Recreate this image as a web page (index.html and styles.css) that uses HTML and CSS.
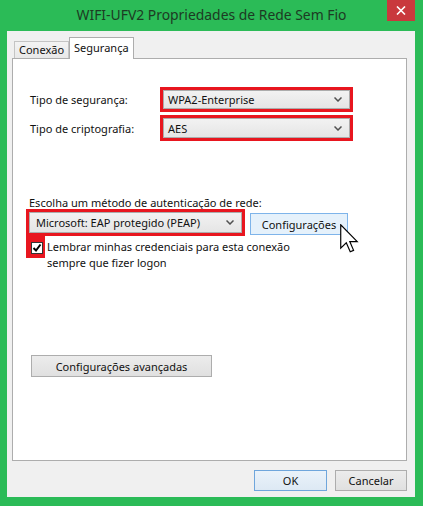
FILE: index.html
```html
<!DOCTYPE html>
<html lang="pt">
<head>
    <meta charset="UTF-8">
    <title>WIFI-UFV2 Propriedades de Rede Sem Fio</title>
    <link rel="stylesheet" href="styles.css">
</head>
<body>
    <div class="title-bar">
        <span class="title-txt">WIFI-UFV2 Propriedades de Rede Sem Fio</span>
        <span class="close-btn">
            <svg width="10" height="9" viewBox="0 0 10 9"><path d="M1 0.5 L9 8.5 M9 0.5 L1 8.5" stroke="#fff" stroke-width="1.6"/></svg>
        </span>
    </div>

    <div class="client">
        <div class="tabs">
            <div class="tab">Conexão</div>
            <div class="tab tab-active">Segurança</div>
        </div>

        <div class="panel">
            <div class="type-grid">
                <span class="lbl">Tipo de segurança:</span>
                <div class="mark">
                    <div class="combo">
                        <span>WPA2-Enterprise</span>
                        <svg class="chev" width="8" height="5" viewBox="0 0 8 5"><path d="M0.5 0.5 L4 4 L7.5 0.5" fill="none" stroke="#505050" stroke-width="1.5"/></svg>
                    </div>
                </div>
                <span class="lbl">Tipo de criptografia:</span>
                <div class="mark">
                    <div class="combo">
                        <span>AES</span>
                        <svg class="chev" width="8" height="5" viewBox="0 0 8 5"><path d="M0.5 0.5 L4 4 L7.5 0.5" fill="none" stroke="#505050" stroke-width="1.5"/></svg>
                    </div>
                </div>
            </div>

            <p class="method-lbl">Escolha um método de autenticação de rede:</p>
            <div class="method-row">
                <div class="mark mark-method">
                    <div class="combo combo-method">
                        <span>Microsoft: EAP protegido (PEAP)</span>
                        <svg class="chev" width="8" height="5" viewBox="0 0 8 5"><path d="M0.5 0.5 L4 4 L7.5 0.5" fill="none" stroke="#505050" stroke-width="1.5"/></svg>
                    </div>
                </div>
                <button class="btn btn-hot cfg-btn">Configurações</button>
            </div>
            <div class="remember-row">
                <div class="mark-chk">
                    <span class="chk">
                        <svg width="10" height="10" viewBox="0 0 10 10"><path d="M1.5 5 L4 7.5 L8.5 1.5" fill="none" stroke="#000" stroke-width="2"/></svg>
                    </span>
                </div>
                <p class="remember-txt">Lembrar minhas credenciais para esta conexão<br>sempre que fizer logon</p>
            </div>

            <button class="btn adv-btn">Configurações avançadas</button>
        </div>

        <div class="actions">
            <button class="btn btn-default act-btn">OK</button>
            <button class="btn act-btn">Cancelar</button>
        </div>
    </div>

    <svg class="cursor" width="19" height="30" viewBox="0 0 13 20.5">
        <path d="M0.5 0.5 L0.5 16.5 L4.3 12.8 L7 19 L9.3 18 L6.7 12 L11.8 12 Z" fill="#fff" stroke="#000" stroke-width="0.8" stroke-linejoin="miter"/>
    </svg>
</body>
</html>
```

FILE: styles.css
```css
*, *:before, *:after {
    margin: 0;
    padding: 0;
    box-sizing: border-box;
}
html, body {
    width: 423px;
    height: 506px;
    overflow: hidden;
}
body {
    background: #2bbb57;
    font-family: 'Segoe UI', 'Noto Sans', sans-serif;
    font-size: 11px;
    color: #111;
}
.title-bar {
    display: flex;
    align-items: flex-start;
    height: 31px;
    padding-left: 36px;
    padding-right: 8px;
}
.title-txt {
    flex: 1;
    text-align: center;
    font-size: 13.9px;
    line-height: 30px;
    color: #1d3a23;
}
.close-btn {
    display: flex;
    align-items: center;
    justify-content: center;
    width: 28px;
    height: 21px;
    background: #c9383d;
}
.client {
    margin: 0 8px 0 7px;
    height: 466px;
    background: #f0f0f0;
    padding: 6px 8px 0 5px;
}
.tabs {
    display: flex;
    align-items: flex-end;
    height: 21px;
    padding-left: 2px;
}
.tab {
    height: 17px;
    padding: 0 4px;
    line-height: 15px;
    border: 1px solid #c4c4c4;
    border-bottom: none;
    background: linear-gradient(#f3f3f3, #e8e8e8);
}
.tab-active {
    position: relative;
    height: 22px;
    margin-bottom: -1px;
    padding: 0 4px;
    line-height: 19px;
    background: #fff;
    border-color: #adadad;
    z-index: 1;
}
.panel {
    height: 403px;
    background: #fff;
    border: 1px solid #adadad;
    padding: 28px 0 0 17px;
}
.type-grid {
    display: grid;
    grid-template-columns: 130px 193px;
    grid-template-rows: 25px 26px;
    row-gap: 3px;
    align-items: center;
}
.mark {
    height: 100%;
    background: #e8161f;
    padding: 3px;
}
.combo {
    display: flex;
    align-items: center;
    justify-content: space-between;
    height: 100%;
    padding: 0 7px 0 4px;
    border: 1px solid #acacac;
    background: linear-gradient(#f2f2f2, #e5e5e5);
}
.method-lbl {
    margin-top: 54px;
    margin-left: -1px;
    line-height: 15px;
}
.method-row {
    display: flex;
    align-items: flex-start;
    margin-top: -1px;
    margin-left: -4px;
}
.mark-method {
    width: 219px;
    height: 27px;
}
.combo-method {
    padding-left: 6px;
}
.btn {
    font-family: inherit;
    font-size: 11px;
    color: #111;
    border: 1px solid #adadad;
    background: linear-gradient(#ececec, #e0e0e0);
}
.btn-hot {
    background: #e5f1fb;
    border-color: #7eb4ea;
}
.btn-default {
    background: linear-gradient(#eaf2fa, #dde9f4);
    border-color: #6fa6dc;
}
.cfg-btn {
    width: 98px;
    height: 22px;
    margin: 4px 0 0 5px;
}
.remember-row {
    display: flex;
    align-items: flex-start;
    margin-left: -4px;
}
.mark-chk {
    width: 19px;
    height: 22px;
    background: #e8161f;
    padding: 6px 2px 4px 5px;
}
.chk {
    display: flex;
    align-items: center;
    justify-content: center;
    width: 12px;
    height: 12px;
    background: #fff;
    border: 1px solid #333;
}
.remember-txt {
    margin: 3px 0 0 2px;
    line-height: 16px;
}
.adv-btn {
    display: block;
    width: 181px;
    height: 22px;
    margin-top: 84px;
    margin-left: 1px;
}
.actions {
    display: flex;
    justify-content: flex-end;
    gap: 8px;
    margin-top: 9px;
}
.act-btn {
    width: 72px;
    height: 21px;
}
.act-btn.btn-default {
    width: 73px;
}
.cursor {
    position: absolute;
    left: 340px;
    top: 224px;
}
```
